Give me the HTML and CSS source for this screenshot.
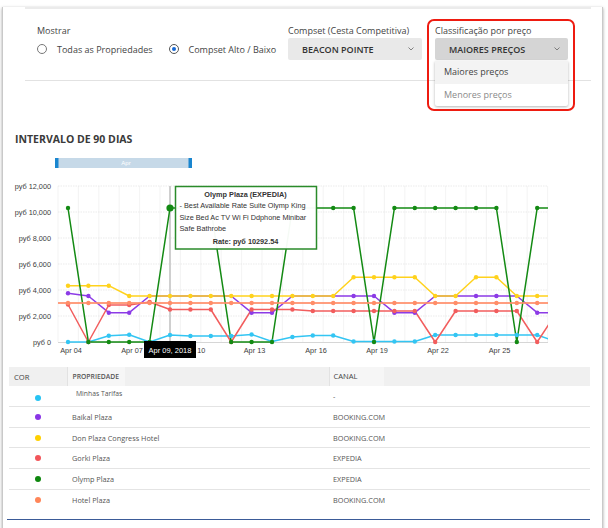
FILE: index.html
```html
<!DOCTYPE html>
<html>
<head>
<meta charset="utf-8">
<link rel="stylesheet" href="styles.css">
</head>
<body>
<div class="frame">
  <div class="rule-top"></div>
  <div class="controls">
    <div class="group group-show">
      <div class="label label-strong">Mostrar</div>
      <div class="radios">
        <span class="radio"></span><span class="radio-text">Todas as Propriedades</span>
        <span class="radio checked"></span><span class="radio-text">Compset Alto / Baixo</span>
      </div>
    </div>
    <div class="group group-compset">
      <div class="label">Compset (Cesta Competitiva)</div>
      <div class="select"><span>BEACON POINTE</span><svg class="chev" width="6" height="4" viewBox="0 0 6 4"><polyline points="0.5,0.5 3,3 5.5,0.5" fill="none" stroke="#666" stroke-width="0.8"/></svg></div>
    </div>
    <div class="group group-sort">
      <div class="label">Classificação por preço</div>
      <div class="select open"><span>MAIORES PREÇOS</span><svg class="chev" width="6" height="4" viewBox="0 0 6 4"><polyline points="0.5,0.5 3,3 5.5,0.5" fill="none" stroke="#666" stroke-width="0.8"/></svg></div>
      <ul class="menu">
        <li class="active">Maiores preços</li>
        <li class="muted">Menores preços</li>
      </ul>
      <div class="highlight"></div>
    </div>
  </div>
  <div class="rule"></div>
  <h2 class="title">INTERVALO DE 90 DIAS</h2>

  <svg class="chart" width="599" height="212" viewBox="3 150 599 212">
    <defs>
      <clipPath id="plot"><rect x="58" y="180" width="490" height="170"/></clipPath>
    </defs>
    <!-- navigator -->
    <rect x="55" y="158" width="137" height="10" fill="#c6d9e8"/>
    <rect x="55" y="158" width="3.5" height="10" fill="#1a86cf"/>
    <rect x="188.5" y="158" width="3.5" height="10" fill="#1a86cf"/>
    <text x="126" y="165.3" class="nav-text">Apr</text>

    <!-- grid -->
    <g stroke="#f0f0f0" stroke-width="0.8">
      <line x1="58" y1="186" x2="58" y2="342"/><line x1="78.4" y1="186" x2="78.4" y2="342"/><line x1="98.8" y1="186" x2="98.8" y2="342"/><line x1="119.2" y1="186" x2="119.2" y2="342"/><line x1="139.6" y1="186" x2="139.6" y2="342"/><line x1="160" y1="186" x2="160" y2="342"/><line x1="180.4" y1="186" x2="180.4" y2="342"/><line x1="200.8" y1="186" x2="200.8" y2="342"/><line x1="221.2" y1="186" x2="221.2" y2="342"/><line x1="241.6" y1="186" x2="241.6" y2="342"/><line x1="262" y1="186" x2="262" y2="342"/><line x1="282.4" y1="186" x2="282.4" y2="342"/><line x1="302.8" y1="186" x2="302.8" y2="342"/><line x1="323.2" y1="186" x2="323.2" y2="342"/><line x1="343.6" y1="186" x2="343.6" y2="342"/><line x1="364" y1="186" x2="364" y2="342"/><line x1="384.4" y1="186" x2="384.4" y2="342"/><line x1="404.8" y1="186" x2="404.8" y2="342"/><line x1="425.2" y1="186" x2="425.2" y2="342"/><line x1="445.6" y1="186" x2="445.6" y2="342"/><line x1="466" y1="186" x2="466" y2="342"/><line x1="486.4" y1="186" x2="486.4" y2="342"/><line x1="506.8" y1="186" x2="506.8" y2="342"/><line x1="527.2" y1="186" x2="527.2" y2="342"/><line x1="547.6" y1="186" x2="547.6" y2="342"/>
    </g>
    <g stroke="#e6e6e6" stroke-width="0.8" stroke-dasharray="1.5 1">
      <line x1="58" y1="186" x2="548" y2="186"/><line x1="58" y1="212" x2="548" y2="212"/><line x1="58" y1="238" x2="548" y2="238"/><line x1="58" y1="264" x2="548" y2="264"/><line x1="58" y1="290" x2="548" y2="290"/><line x1="58" y1="316" x2="548" y2="316"/>
    </g>
    <line x1="58" y1="342.5" x2="548" y2="342.5" stroke="#d6d6d6" stroke-width="1"/>

    <!-- y labels -->
    <g class="axis-text" text-anchor="end">
      <text x="51" y="188.6">руб 12,000</text>
      <text x="51" y="214.6">руб 10,000</text>
      <text x="51" y="240.6">руб 8,000</text>
      <text x="51" y="266.6">руб 6,000</text>
      <text x="51" y="292.6">руб 4,000</text>
      <text x="51" y="318.6">руб 2,000</text>
      <text x="51" y="344.6">руб 0</text>
    </g>

    <!-- crosshair -->
    <line x1="170" y1="186" x2="170" y2="342" stroke="#cfcfcf" stroke-width="2"/>

    <g clip-path="url(#plot)" fill="none" stroke-width="1.5" stroke-linejoin="round">
      <polyline stroke="#33c5f3" points="68,342 88.4,342 108.8,335.7 129.2,334.7 149.6,342 170,335 190.4,336 210.8,336 231.2,336 251.6,334.5 272,341.5 292.4,337 312.8,335.5 333.2,335.5 353.6,341.5 374,341.5 394.4,341.5 414.8,341.5 435.2,335 455.6,335 476,335 496.4,335 516.8,335 537.2,335 557.6,342"/>
      <polyline stroke="#8c3be6" points="68,293.3 88.4,296 108.8,312.7 129.2,312.7 149.6,296 170,296 190.4,296 210.8,296 231.2,296 251.6,312.7 272,312.7 292.4,296 312.8,296 333.2,296 353.6,296 374,296 394.4,312.7 414.8,312.7 435.2,296 455.6,296 476,296 496.4,296 516.8,296 537.2,312.7 557.6,312.7"/>
      <polyline stroke="#ffd21c" points="68,285.7 88.4,285.7 108.8,285.7 129.2,296 149.6,296 170,296 190.4,296 210.8,296 231.2,296 251.6,296 272,296 292.4,296 312.8,296 333.2,296 353.6,277.3 374,277.3 394.4,277.3 414.8,277.3 435.2,296 455.6,296 476,277.3 496.4,277.3 516.8,296 537.2,296 557.6,296"/>
      <polyline stroke="#f25d5d" points="68,304.5 88.4,342 108.8,305 129.2,305 149.6,302 170,309.5 190.4,309.5 210.8,309.5 231.2,342 251.6,309.5 272,309.5 292.4,309.5 312.8,311 333.2,311 353.6,311 374,311 394.4,311 414.8,311 435.2,342 455.6,311 476,311 496.4,311 516.8,311 537.2,342 557.6,311"/>
      <polyline stroke="#138a13" points="68,208 88.4,342 108.8,342 129.2,342 149.6,342 170,208 190.4,208 210.8,208 231.2,342 251.6,342 272,342 292.4,208 312.8,208 333.2,208 353.6,208 374,342 394.4,208 414.8,208 435.2,208 455.6,208 476,208 496.4,208 516.8,342 537.2,208 557.6,208"/>
      <polyline stroke="#ff8d68" stroke-opacity="0.85" stroke-width="2" points="58,303 557.6,303"/>

      <g fill="#33c5f3"><circle cx="68" cy="342" r="2.2"/><circle cx="88.4" cy="342" r="2.2"/><circle cx="108.8" cy="335.7" r="2.2"/><circle cx="129.2" cy="334.7" r="2.2"/><circle cx="149.6" cy="342" r="2.2"/><circle cx="170" cy="335" r="2.2"/><circle cx="190.4" cy="336" r="2.2"/><circle cx="210.8" cy="336" r="2.2"/><circle cx="231.2" cy="336" r="2.2"/><circle cx="251.6" cy="334.5" r="2.2"/><circle cx="272" cy="341.5" r="2.2"/><circle cx="292.4" cy="337" r="2.2"/><circle cx="312.8" cy="335.5" r="2.2"/><circle cx="333.2" cy="335.5" r="2.2"/><circle cx="353.6" cy="341.5" r="2.2"/><circle cx="374" cy="341.5" r="2.2"/><circle cx="394.4" cy="341.5" r="2.2"/><circle cx="414.8" cy="341.5" r="2.2"/><circle cx="435.2" cy="335" r="2.2"/><circle cx="455.6" cy="335" r="2.2"/><circle cx="476" cy="335" r="2.2"/><circle cx="496.4" cy="335" r="2.2"/><circle cx="516.8" cy="335" r="2.2"/><circle cx="537.2" cy="335" r="2.2"/></g>
      <g fill="#8c3be6"><circle cx="68" cy="293.3" r="2.2"/><circle cx="88.4" cy="296" r="2.2"/><circle cx="108.8" cy="312.7" r="2.2"/><circle cx="129.2" cy="312.7" r="2.2"/><circle cx="251.6" cy="312.7" r="2.2"/><circle cx="272" cy="312.7" r="2.2"/><circle cx="353.6" cy="296" r="2.2"/><circle cx="374" cy="296" r="2.2"/><circle cx="394.4" cy="312.7" r="2.2"/><circle cx="414.8" cy="312.7" r="2.2"/><circle cx="476" cy="296" r="2.2"/><circle cx="496.4" cy="296" r="2.2"/><circle cx="537.2" cy="312.7" r="2.2"/></g>
      <g fill="#ffd21c"><circle cx="68" cy="285.7" r="2.2"/><circle cx="88.4" cy="285.7" r="2.2"/><circle cx="108.8" cy="285.7" r="2.2"/><circle cx="129.2" cy="296" r="2.2"/><circle cx="149.6" cy="296" r="2.2"/><circle cx="170" cy="296" r="2.2"/><circle cx="190.4" cy="296" r="2.2"/><circle cx="210.8" cy="296" r="2.2"/><circle cx="231.2" cy="296" r="2.2"/><circle cx="251.6" cy="296" r="2.2"/><circle cx="272" cy="296" r="2.2"/><circle cx="292.4" cy="296" r="2.2"/><circle cx="312.8" cy="296" r="2.2"/><circle cx="333.2" cy="296" r="2.2"/><circle cx="353.6" cy="277.3" r="2.2"/><circle cx="374" cy="277.3" r="2.2"/><circle cx="394.4" cy="277.3" r="2.2"/><circle cx="414.8" cy="277.3" r="2.2"/><circle cx="435.2" cy="296" r="2.2"/><circle cx="455.6" cy="296" r="2.2"/><circle cx="476" cy="277.3" r="2.2"/><circle cx="496.4" cy="277.3" r="2.2"/><circle cx="516.8" cy="296" r="2.2"/><circle cx="537.2" cy="296" r="2.2"/></g>
      <g fill="#f25d5d"><circle cx="68" cy="304.5" r="2.2"/><circle cx="88.4" cy="342" r="2.2"/><circle cx="108.8" cy="305" r="2.2"/><circle cx="129.2" cy="305" r="2.2"/><circle cx="149.6" cy="302" r="2.2"/><circle cx="170" cy="309.5" r="2.2"/><circle cx="190.4" cy="309.5" r="2.2"/><circle cx="210.8" cy="309.5" r="2.2"/><circle cx="231.2" cy="342" r="2.2"/><circle cx="251.6" cy="309.5" r="2.2"/><circle cx="272" cy="309.5" r="2.2"/><circle cx="292.4" cy="309.5" r="2.2"/><circle cx="312.8" cy="311" r="2.2"/><circle cx="333.2" cy="311" r="2.2"/><circle cx="353.6" cy="311" r="2.2"/><circle cx="374" cy="311" r="2.2"/><circle cx="394.4" cy="311" r="2.2"/><circle cx="414.8" cy="311" r="2.2"/><circle cx="435.2" cy="342" r="2.2"/><circle cx="455.6" cy="311" r="2.2"/><circle cx="476" cy="311" r="2.2"/><circle cx="496.4" cy="311" r="2.2"/><circle cx="516.8" cy="311" r="2.2"/><circle cx="537.2" cy="342" r="2.2"/></g>
      <g fill="#138a13"><circle cx="68" cy="208" r="2.2"/><circle cx="88.4" cy="342" r="2.2"/><circle cx="108.8" cy="342" r="2.2"/><circle cx="129.2" cy="342" r="2.2"/><circle cx="149.6" cy="342" r="2.2"/><circle cx="231.2" cy="342" r="2.2"/><circle cx="251.6" cy="342" r="2.2"/><circle cx="272" cy="342" r="2.2"/><circle cx="333.2" cy="208" r="2.2"/><circle cx="353.6" cy="208" r="2.2"/><circle cx="374" cy="342" r="2.2"/><circle cx="394.4" cy="208" r="2.2"/><circle cx="414.8" cy="208" r="2.2"/><circle cx="435.2" cy="208" r="2.2"/><circle cx="455.6" cy="208" r="2.2"/><circle cx="476" cy="208" r="2.2"/><circle cx="496.4" cy="208" r="2.2"/><circle cx="516.8" cy="342" r="2.2"/><circle cx="537.2" cy="208" r="2.2"/><circle cx="170" cy="208" r="3.6"/></g>
      <g fill="#ff8d68"><circle cx="68" cy="303" r="2.2"/><circle cx="88.4" cy="303" r="2.2"/><circle cx="108.8" cy="303" r="2.2"/><circle cx="129.2" cy="303" r="2.2"/><circle cx="149.6" cy="303" r="2.2"/><circle cx="170" cy="303" r="2.2"/><circle cx="190.4" cy="303" r="2.2"/><circle cx="210.8" cy="303" r="2.2"/><circle cx="231.2" cy="303" r="2.2"/><circle cx="251.6" cy="303" r="2.2"/><circle cx="272" cy="303" r="2.2"/><circle cx="292.4" cy="303" r="2.2"/><circle cx="312.8" cy="303" r="2.2"/><circle cx="333.2" cy="303" r="2.2"/><circle cx="353.6" cy="303" r="2.2"/><circle cx="374" cy="303" r="2.2"/><circle cx="394.4" cy="303" r="2.2"/><circle cx="414.8" cy="303" r="2.2"/><circle cx="435.2" cy="303" r="2.2"/><circle cx="455.6" cy="303" r="2.2"/><circle cx="476" cy="303" r="2.2"/><circle cx="496.4" cy="303" r="2.2"/><circle cx="516.8" cy="303" r="2.2"/><circle cx="537.2" cy="303" r="2.2"/></g>
    </g>

    <!-- x labels -->
    <g class="axis-text" text-anchor="middle">
      <text x="71" y="353">Apr 04</text>
      <text x="132" y="353">Apr 07</text>
      <text x="201.2" y="353">10</text>
      <text x="254.5" y="353">Apr 13</text>
      <text x="316" y="353">Apr 16</text>
      <text x="377" y="353">Apr 19</text>
      <text x="438" y="353">Apr 22</text>
      <text x="499.5" y="353">Apr 25</text>
    </g>

    <!-- x tooltip -->
    <rect x="144" y="341" width="52" height="17" fill="#000"/>
    <text x="170" y="352.5" class="date-text" text-anchor="middle">Apr 09, 2018</text>

    <!-- tooltip -->
    <rect x="175.5" y="186.5" width="141" height="62.5" fill="#fff" fill-opacity="0.96" stroke="#2a8b2a" stroke-width="1.5"/>
    <g class="tip-text">
      <text x="245.5" y="196.8" text-anchor="middle" class="tip-bold">Olymp Plaza (EXPEDIA)</text>
      <text x="179.5" y="208">- Best Available Rate Suite Olymp King</text>
      <text x="179.5" y="219.7">Size Bed Ac TV Wi Fi Ddphone Minibar</text>
      <text x="179.5" y="231.4">Safe Bathrobe</text>
      <text x="245.5" y="243.6" text-anchor="middle" class="tip-bold">Rate: руб 10292.54</text>
    </g>
  </svg>

  <div class="table-wrap">
    <table class="grid">
      <colgroup><col class="c1"><col class="c2"><col class="c3"></colgroup>
      <thead>
        <tr><th class="h-cor">COR</th><th class="h-prop"><span>PROPRIEDADE</span></th><th class="h-canal"><span>CANAL</span></th></tr>
      </thead>
      <tbody>
        <tr class="first"><td class="cor"><span class="dot dot-cyan"></span></td><td class="prop mine">Minhas Tarifas</td><td class="canal">-</td></tr>
        <tr><td class="cor"><span class="dot dot-purple"></span></td><td class="prop">Baikal Plaza</td><td class="canal">BOOKING.COM</td></tr>
        <tr><td class="cor"><span class="dot dot-yellow"></span></td><td class="prop">Don Plaza Congress Hotel</td><td class="canal">BOOKING.COM</td></tr>
        <tr><td class="cor"><span class="dot dot-red"></span></td><td class="prop">Gorki Plaza</td><td class="canal">EXPEDIA</td></tr>
        <tr><td class="cor"><span class="dot dot-green"></span></td><td class="prop">Olymp Plaza</td><td class="canal">EXPEDIA</td></tr>
        <tr class="last"><td class="cor"><span class="dot dot-orange"></span></td><td class="prop">Hotel Plaza</td><td class="canal">BOOKING.COM</td></tr>
      </tbody>
    </table>
  </div>
</div>
</body>
</html>
```

FILE: styles.css
```css
* { box-sizing: border-box; }

body {
  margin: 0;
  background: #fff;
  font-family: "Open Sans", "Liberation Sans", sans-serif;
  color: #444;
}

.frame {
  margin-left: 2px;
  width: 601px;
  height: 523px;
  border: 1px solid #c9c9c9;
  border-top: 0;
  background: #fff;
  box-shadow: 0 1px 3px rgba(0, 0, 0, 0.35);
}

.rule-top {
  height: 2px;
  margin: 7px 11px 0 22px;
  background: #ebebeb;
}

.controls {
  display: flex;
  padding: 16px 0 0 34px;
}

.label {
  height: 12px;
  font-size: 9px;
  line-height: 12px;
  color: #444;
  white-space: nowrap;
}

.label-strong { font-weight: 500; }

.group-show { width: 251px; }
.group-compset { width: 147px; }
.group-sort { width: 133px; position: relative; }

.radios {
  display: flex;
  align-items: center;
  height: 22px;
  margin-top: 1px;
  font-size: 9px;
  color: #444;
  white-space: nowrap;
}

.radio {
  display: flex;
  align-items: center;
  justify-content: center;
  width: 10px;
  height: 10px;
  margin-right: 10px;
  border: 1px solid #777;
  border-radius: 50%;
  flex: none;
}

.radio.checked {
  margin-left: 16px;
  border-color: #555;
}

.radio.checked::after {
  content: "";
  width: 4px;
  height: 4px;
  border-radius: 50%;
  background: #1769d6;
}

.select {
  display: flex;
  align-items: center;
  justify-content: space-between;
  width: 134px;
  height: 22px;
  margin-top: 1px;
  padding: 0 8px 0 14px;
  background: #e9e9e9;
  border-radius: 2px;
  font-size: 9px;
  font-weight: 600;
  color: #333;
  white-space: nowrap;
}

.select.open {
  width: 133px;
  background: #d5d5d5;
}

.chev { display: block; }

.menu {
  position: absolute;
  top: 36px;
  left: 0;
  width: 133px;
  margin: 0;
  padding: 0;
  list-style: none;
  background: #fff;
  box-shadow: 0 1px 3px rgba(0, 0, 0, 0.3);
  border-radius: 0 0 2px 2px;
  font-size: 9px;
}

.menu li {
  height: 22.5px;
  padding-left: 9px;
  line-height: 22.5px;
  color: #444;
}

.menu li.active { background: #f3f3f3; }
.menu li.muted { color: #8a8a8a; }

.highlight {
  position: absolute;
  top: -6px;
  left: -8px;
  width: 148px;
  height: 92px;
  border: 2.5px solid #ee1b10;
  border-radius: 7px;
  pointer-events: none;
}

.rule {
  height: 1px;
  margin: 20px 11px 0 22px;
  background: #e2e2e2;
}

.title {
  margin: 51px 0 0 12px;
  font-size: 10.5px;
  line-height: 14px;
  font-weight: 700;
  color: #3a3a3a;
}

.chart {
  display: block;
  margin-top: 4px;
  font-family: "Liberation Sans", Arial, sans-serif;
}

.axis-text text {
  font-size: 7.3px;
  fill: #3d3d3d;
}

.nav-text {
  font-size: 6px;
  fill: #fff;
  text-anchor: middle;
}

.date-text {
  font-size: 7.5px;
  fill: #fff;
}

.tip-text text {
  font-size: 7.3px;
  fill: #333;
}

.tip-text .tip-bold { font-weight: 700; }

.table-wrap {
  width: 583px;
  margin: 5px 0 0 4px;
  padding: 0 0 9px 2px;
  border-bottom: 1px solid #3b5b98;
}

.grid {
  width: 581px;
  border-collapse: collapse;
  table-layout: fixed;
}

.c1 { width: 58px; }
.c2 { width: 262px; }
.c3 { width: 261px; }

.grid th {
  height: 19px;
  padding: 0 0 0 5px;
  background: #f0f0f0;
  text-align: left;
  font-size: 7.6px;
  font-weight: 400;
  color: #444;
}

.grid th.h-prop,
.grid th.h-canal {
  border-left: 1px solid #e2e2e2;
  padding-left: 0;
}

.grid th span {
  display: inline-block;
  height: 19px;
  line-height: 19px;
  background: #f6f6f6;
}

.grid th.h-prop span {
  width: 57px;
  padding-left: 5px;
  font-size: 6.8px;
  font-weight: 600;
  color: #555;
}

.grid th.h-canal span {
  width: 54px;
  padding-left: 4px;
}

.grid td {
  height: 20.67px;
  padding: 0;
  border-bottom: 1px solid #e4e4e4;
  font-size: 7.3px;
  color: #555;
  vertical-align: middle;
}

.grid tr.last td { border-bottom: 0; }

.grid td.cor { padding-left: 26px; }
.grid td.prop { padding-left: 5px; }
.grid td.canal { padding-left: 4px; }

.grid td.prop.mine {
  padding: 3px 0 0 9px;
  vertical-align: top;
  font-size: 6.8px;
  line-height: 9px;
}

.dot {
  display: block;
  width: 6px;
  height: 6px;
  border-radius: 50%;
}

.dot-cyan { background: #27c3f3; margin-top: 3px; }
.dot-purple { background: #8a35e6; }
.dot-yellow { background: #ffd000; }
.dot-red { background: #f2555a; }
.dot-green { background: #0e870e; }
.dot-orange { background: #ff8659; }
```
